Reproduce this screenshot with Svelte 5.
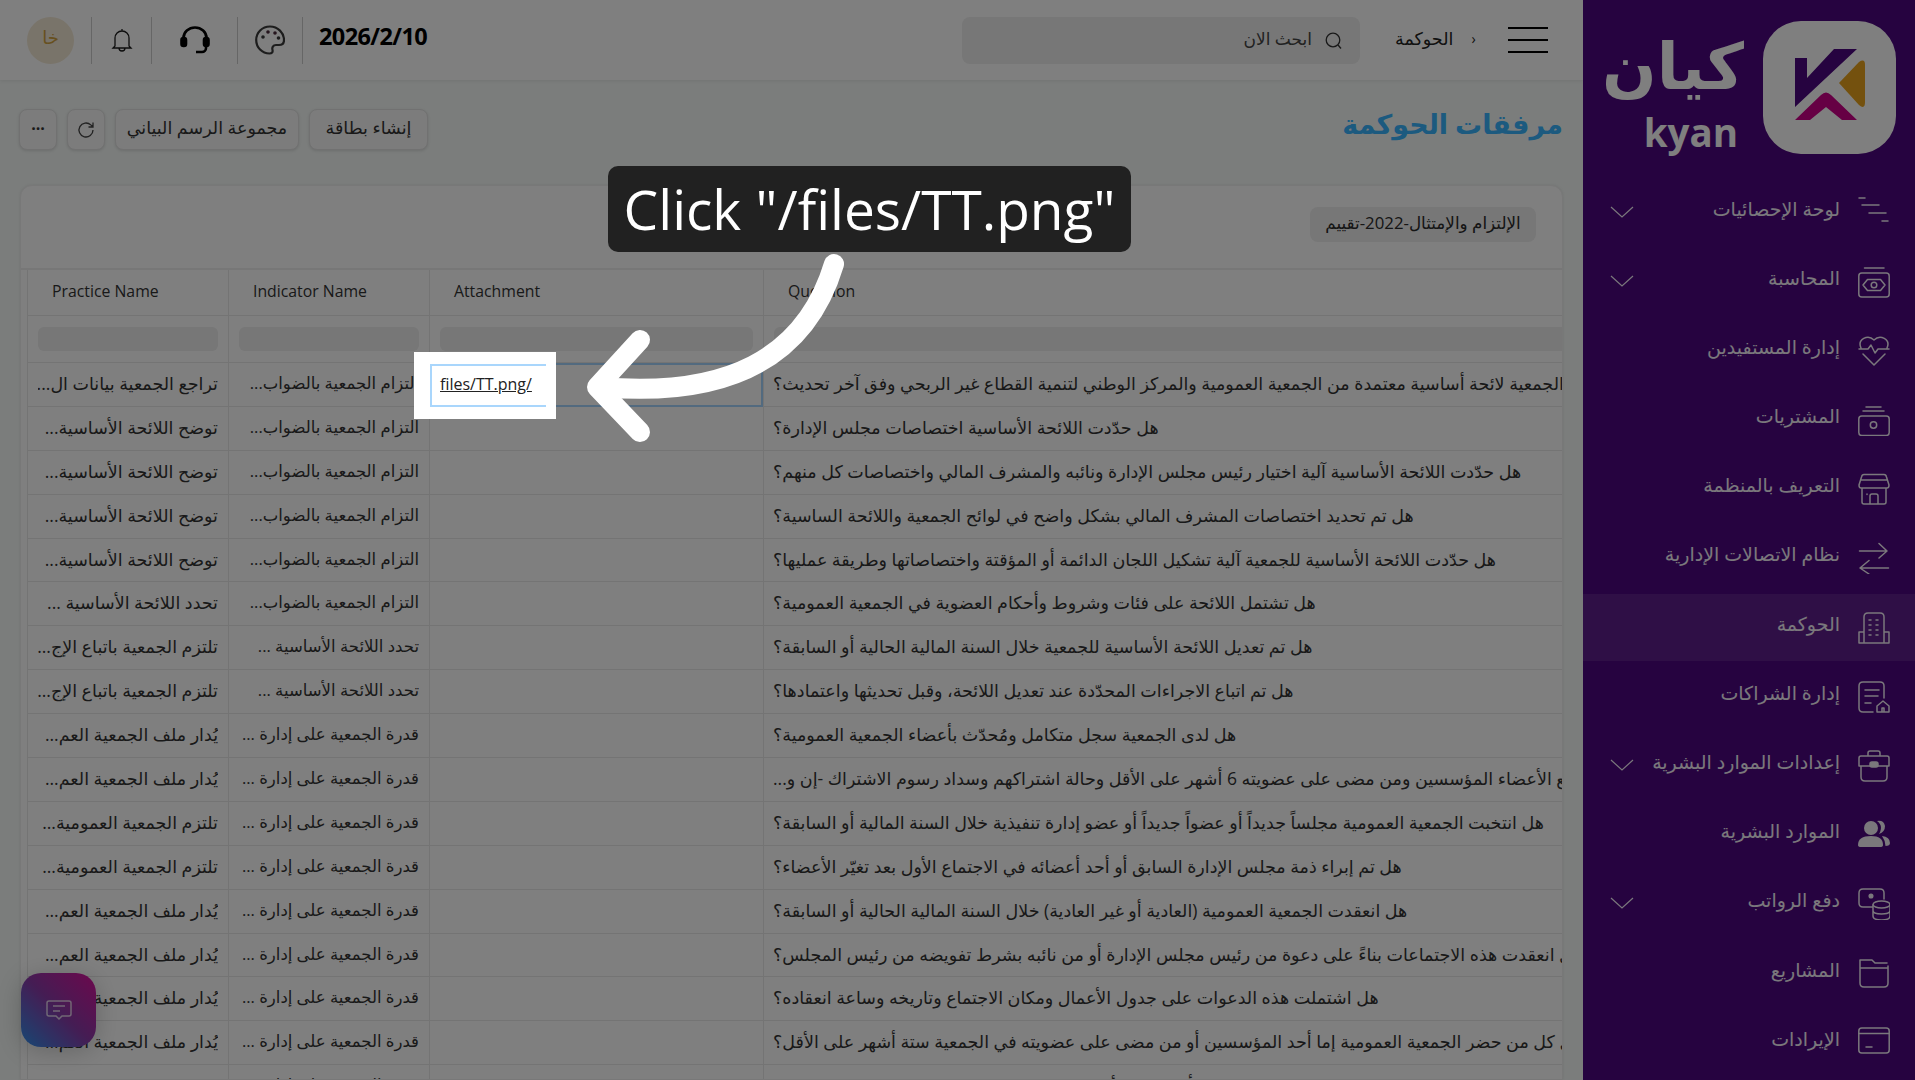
<script>
  const q = [
    'هل لدى الجمعية لائحة أساسية معتمدة من الجمعية العمومية والمركز الوطني لتنمية القطاع غير الربحي وفق آخر تحديث؟',
    'هل حدّدت اللائحة الأساسية اختصاصات مجلس الإدارة؟',
    'هل حدّدت اللائحة الأساسية آلية اختيار رئيس مجلس الإدارة ونائبه والمشرف المالي واختصاصات كل منهم؟',
    'هل تم تحديد اختصاصات المشرف المالي بشكل واضح في لوائح الجمعية واللائحة الساسية؟',
    'هل حدّدت اللائحة الأساسية للجمعية آلية تشكيل اللجان الدائمة أو المؤقتة واختصاصاتها وطريقة عمليها؟',
    'هل تشتمل اللائحة على فئات وشروط وأحكام العضوية في الجمعية العمومية؟',
    'هل تم تعديل اللائحة الأساسية للجمعية خلال السنة المالية الحالية أو السابقة؟',
    'هل تم اتباع الاجراءات المحدّدة عند تعديل اللائحة، وقبل تحديثها واعتمادها؟',
    'هل لدى الجمعية سجل متكامل ومُحدّث بأعضاء الجمعية العمومية؟',
    'هل جميع الأعضاء المؤسسين ومن مضى على عضويته 6 أشهر على الأقل وحالة اشتراكهم وسداد رسوم الاشتراك -إن و...',
    'هل انتخبت الجمعية العمومية مجلساً جديداً أو عضواً جديداً أو عضو إدارة تنفيذية خلال السنة المالية أو السابقة؟',
    'هل تم إبراء ذمة مجلس الإدارة السابق أو أحد أعضائه في الاجتماع الأول بعد تغيّر الأعضاء؟',
    'هل انعقدت الجمعية العمومية (العادية أو غير العادية) خلال السنة المالية الحالية أو السابقة؟',
    'هل انعقدت هذه الاجتماعات بناءً على دعوة من رئيس مجلس الإدارة أو من نائبه بشرط تفويضه من رئيس المجلس؟',
    'هل اشتملت هذه الدعوات على جدول الأعمال ومكان الاجتماع وتاريخه وساعة انعقاده؟',
    'هل كل من حضر الجمعية العمومية إما أحد المؤسسين أو من مضى على عضويته في الجمعية ستة أشهر على الأقل؟',
    'هل أتم جميع الأعضاء سداد رسوم الاشتراك خلال السنة المالية؟'
  ];
  const p1 = 'تراجع الجمعية بيانات ال...', p2 = 'توضح اللائحة الأساسية...', p3 = 'تحدد اللائحة الأساسية ...',
        p4 = 'تلتزم الجمعية باتباع الإج...', p5 = 'يُدار ملف الجمعية العم...', p6 = 'تلتزم الجمعية العمومية...';
  const practice = [p1,p2,p2,p2,p2,p3,p4,p4,p5,p5,p6,p6,p5,p5,p5,p5,p5];
  const i1 = 'التزام الجمعية بالضواب...', i2 = 'تحدد اللائحة الأساسية ...', i3 = 'قدرة الجمعية على إدارة ...';
  const indicator = [i1,i1,i1,i1,i1,i1,i2,i2,i3,i3,i3,i3,i3,i3,i3,i3,i3];
  const rows = q.map((question, i) => ({ question, practice: practice[i], indicator: indicator[i] }));
  const nav = [
    { t: 'لوحة الإحصائيات', k: 'dash', c: true },
    { t: 'المحاسبة', k: 'money', c: true },
    { t: 'إدارة المستفيدين', k: 'heart' },
    { t: 'المشتريات', k: 'wallet' },
    { t: 'التعريف بالمنظمة', k: 'store' },
    { t: 'نظام الاتصالات الإدارية', k: 'swap' },
    { t: 'الحوكمة', k: 'building', a: true },
    { t: 'إدارة الشراكات', k: 'doc' },
    { t: 'إعدادات الموارد البشرية', k: 'case', c: true },
    { t: 'الموارد البشرية', k: 'users' },
    { t: 'دفع الرواتب', k: 'pay', c: true },
    { t: 'المشاريع', k: 'folder' },
    { t: 'الإيرادات', k: 'card' }
  ];
</script>

<div class="page">
  <main class="main">
    <header class="top">
      <div class="avatar">خا</div>
      <div class="cell bell">
        <svg width="22" height="24" viewBox="0 0 22 24" fill="none" stroke="#1c1c1c" stroke-width="1.3"><path d="M11 1v2M4 18V10a7 7 0 0 1 14 0v8l2 2H2zM8 20a3 3 0 0 0 6 0"/></svg>
      </div>
      <div class="cell head">
        <svg width="30" height="28" viewBox="0 0 30 28" fill="none" stroke="#000" stroke-width="2.6"><path d="M3.500 14V12a11.500 10.500 0 0 1 23 0v2"/><rect x="1.500" y="12" width="4.500" height="8" rx="2" fill="#000"/><rect x="24" y="12" width="4.500" height="8" rx="2" fill="#000"/><path d="M26 20v2a4 4 0 0 1-4 4h-6"/></svg>
      </div>
      <div class="cell pal">
        <svg width="30" height="30" viewBox="0 0 30 30" fill="none" stroke="#3a3a3a" stroke-width="2.200"><path d="M15 1.500C7 1.500 1.200 7.500 1.200 15S7 28.500 14.500 28.500c2.500 0 3.500-1.500 3-3.500-.7-2.500.5-5 3.500-5h3c3 0 5-2 5-5 0-7-6-13.500-14-13.500z"/><circle cx="8" cy="12" r="1.800" fill="#3a3a3a" stroke="none"/><circle cx="13" cy="7" r="1.800" fill="#4a2a3a" stroke="none"/><circle cx="20" cy="8" r="1.800" fill="#4a2a3a" stroke="none"/><circle cx="23.500" cy="13" r="1.800" fill="#3a3a3a" stroke="none"/></svg>
      </div>
      <div class="date">2026/2/10</div>
      <div class="search">
        <span class="sText">ابحث الان</span>
        <svg width="17" height="17" viewBox="0 0 17 17" fill="none" stroke="#333" stroke-width="1.300"><circle cx="8" cy="8" r="6.800"/><path d="M13 13l3 3.500"/></svg>
      </div>
      <div class="crumb"><span>الحوكمة</span><span class="chev">›</span></div>
      <div class="burger"><i></i><i></i><i></i></div>
    </header>

    <div class="bar">
      <div class="tools">
        <button class="btn sq dots">···</button>
        <button class="btn sq">
          <svg width="18" height="18" viewBox="0 0 18 18" fill="none" stroke="#444" stroke-width="1.300"><path d="M16 9a7 7 0 1 1-2.200-5.100L16 6M16 1.500V6h-4.500"/></svg>
        </button>
        <button class="btn wide1">مجموعة الرسم البياني</button>
        <button class="btn wide2">إنشاء بطاقة</button>
      </div>
      <h1 class="title">مرفقات الحوكمة</h1>
    </div>

    <section class="card">
      <div class="cardHead"><div class="tag"><span>الإلتزام والإمتثال-2022-تقييم</span></div></div>
      <div class="table">
        <div class="row hrow">
          <div class="c c1">Practice Name</div>
          <div class="c c2">Indicator Name</div>
          <div class="c c3">Attachment</div>
          <div class="c c4">Question</div>
        </div>
        <div class="row frow">
          <div class="c c1"><i class="inp"></i></div>
          <div class="c c2"><i class="inp"></i></div>
          <div class="c c3"><i class="inp"></i></div>
          <div class="c c4"><i class="inp lastinp"></i></div>
        </div>
        {#each rows as r, i}
          <div class="row drow">
            <div class="c c1 rt"><span class="txt">{r.practice}</span></div>
            <div class="c c2 rt"><span class="txt">{r.indicator}</span></div>
            <div class="c c3" class:sel={i === 0}></div>
            <div class="c c4 qt"><span class="qtext">{r.question}</span></div>
          </div>
        {/each}
      </div>
    </section>
  </main>

  <aside class="side">
    <div class="brand">
      <div class="words">
        <div class="ar">كيان</div>
        <div class="en">kyan</div>
      </div>
      <div class="logo">
        <svg width="133" height="133" viewBox="0 0 133 133">
          <path d="M32 37H44V57L71 28H94L32 86Z" fill="#4d0680"/>
          <path d="M76 62L96 41Q102 37 102 44V81Q102 89 96 84Z" fill="#e8a21c"/>
          <path d="M32 99L58 74Q63 69 68 74L94 99H79L63 86L47 99Z" fill="#cc0088"/>
        </svg>
      </div>
    </div>
    <nav class="nav">
      {#each nav as n}
        <div class="item" class:active={n.a}>
          <svg class="ic" width="32" height="32" viewBox="0 0 32 32" fill="none" stroke="currentColor" stroke-width="1.500" stroke-linecap="round" stroke-linejoin="round">
            {#if n.k === 'dash'}
              <path d="M1 1H7M4 8H21M11 16H28M24 24H30"/>
            {:else if n.k === 'money'}
              <path d="M6.500 2H26"/><rect x=".8" y="7" width="30.400" height="24" rx="3"/><path d="M5 19L9.500 13.500H22.500L27 19L22.500 24.500H9.500Z"/><circle cx="16" cy="19" r="2.800"/>
            {:else if n.k === 'heart'}
              <path d="M3 13C-1 4 10-1 16 5C22-1 33 4 29 13M1 14H10L13 10L17 18L20 14H31M5 19L16 30L27 19"/>
            {:else if n.k === 'wallet'}
              <path d="M8 3H23M5 7H26"/><rect x=".8" y="12" width="30.400" height="19.500" rx="3"/><circle cx="15.500" cy="21" r="3.200"/>
            {:else if n.k === 'store'}
              <path d="M6 1.500H26Q28 1.500 28.500 4L31 12Q31 15 29 15H3Q1 15 1 12L3.500 4Q4 1.500 6 1.500ZM3.500 7H28.500M4 15V29Q4 31 6 31H26Q28 31 28 29V15M12 31V23Q12 21 14 21H18Q20 21 20 23V31M9 21V21.500"/>
            {:else if n.k === 'swap'}
              <path d="M1.500 9H29M21 1.500L29 9L21 16M30.500 26H3M11 18.500L2 26L11 32"/>
            {:else if n.k === 'building'}
              <path d="M6 31V5Q6 1 10 1H22Q26 1 26 5V31M1 31V20H6M26 20H31V31M1 31H31M11 8H13M18 8H20M11 13H13M18 13H20M11 18H13M18 18H20M11 23H13M18 23H20"/>
            {:else if n.k === 'doc'}
              <path d="M26 17V5Q26 1 22 1H5Q1 1 1 5V27Q1 31 5 31H15M7 9H21M7 15H20M7 22H13M19 31V25L25 20L31 25V31ZM24 31V27H26V31"/>
            {:else if n.k === 'case'}
              <path d="M10 6V3Q10 1 12 1H20Q22 1 22 3V6M3 6H29Q31 6 31 8V16H1V8Q1 6 3 6ZM3 16V27Q3 31 7 31H25Q29 31 29 27V16"/><rect x="12" y="12" width="8" height="5" rx="2" fill="currentColor"/>
            {:else if n.k === 'users'}
              <g fill="currentColor" stroke="none"><circle cx="13" cy="9" r="7"/><path d="M0 26Q0 17 13 17Q25 17 25 26Q25 28 22 28H3Q0 28 0 26Z"/><path d="M19 2Q26 1 27 7Q27 13 21 15Q24 10 22.500 6Q21 3 19 2ZM24 17Q32 18 32 24Q32 27 27.500 27Q27 21 24 17Z"/></g>
            {:else if n.k === 'pay'}
              <path d="M14 19H5Q1 19 1 15V5Q1 1 5 1H22Q26 1 26 5V11M15 17V28Q15 32 23.500 32Q32 32 32 28V17M15 22.500Q15 26 23.500 26Q32 26 32 22.500"/><ellipse cx="23.500" cy="16.500" rx="8.500" ry="3.500"/><circle cx="13" cy="8" r="1.800" fill="currentColor"/>
            {:else if n.k === 'folder'}
              <path d="M2 8V25Q2 29 6 29H26Q30 29 30 25V8M2 8V2H14L17 5H29M2 10H30"/>
            {:else if n.k === 'card'}
              <rect x=".8" y="1" width="30.400" height="25" rx="3"/><path d="M1 6.500H31M8 20H14"/>
            {/if}
          </svg>
          <span class="lbl">{n.t}</span>
          {#if n.c}
            <svg class="dn" width="24" height="12" viewBox="0 0 24 12" fill="none" stroke="currentColor" stroke-width="1.200"><path d="M1 1L12 11L23 1"/></svg>
          {/if}
        </div>
      {/each}
    </nav>
  </aside>

  <div class="fab">
    <svg width="26" height="21" viewBox="0 0 26 21" fill="none" stroke="#fff" stroke-width="1.500" stroke-opacity=".75"><path d="M3 1H23Q25 1 25 3V14Q25 16 23 16H16L13 19L10 16H3Q1 16 1 14V3Q1 1 3 1ZM7 6H19M7 11H14"/></svg>
  </div>

  <div class="dim"></div>

  <div class="spot">
    <div class="spotCell"><span class="link">files/TT.png/</span></div>
  </div>

  <div class="tip">Click "/files/TT.png"</div>

  <svg class="arrow" width="1915" height="1080" viewBox="0 0 1915 1080" fill="none" stroke="#fff" stroke-width="20" stroke-linecap="round" stroke-linejoin="round">
    <path d="M834 264C805 360 725 398 600 387"/>
    <path d="M640 340L597 387L640 432"/>
  </svg>
</div>

<style>
  :global(body) { margin: 0; }
  .page {
    position: relative; display: flex; width: 1915px; height: 1080px; overflow: hidden;
    font-family: "Open Sans", "DejaVu Sans", sans-serif; background: #f6faf8; color: #2a2a2a;
  }
  .main { width: 1583px; flex: none; display: flex; flex-direction: column; }

  .top {
    height: 80px; flex: none; background: #fff; display: flex; align-items: center; padding: 0 35px 0 27px;
    box-shadow: 0 1px 4px rgba(0,0,0,.08); box-sizing: border-box;
  }
  .avatar {
    width: 47px; height: 47px; border-radius: 50%; background: #f3e8d4; color: #cfa13e; font-size: 18px;
    display: flex; align-items: center; justify-content: center; margin-right: 17px; padding-bottom: 6px; box-sizing: border-box;
  }
  .cell { height: 47px; display: flex; align-items: center; justify-content: center; border-left: 1px solid #ccc; box-sizing: border-box; }
  .bell { width: 60px; }
  .head { width: 86px; }
  .pal { width: 65px; }
  .date { border-left: 1px solid #ccc; height: 47px; padding: 0 0 8px 16px; box-sizing: border-box; display: flex; align-items: center; font-size: 23.500px; font-weight: 700; color: #000; letter-spacing: -.6px; width: 128px; }
  .search {
    margin-left: auto; width: 398px; height: 47px; border-radius: 8px; background: #eee; display: flex; align-items: center;
    justify-content: flex-end; gap: 13px; padding-right: 18px; box-sizing: border-box; font-size: 17px; color: #444;
  }
  .sText { padding-bottom: 4px; }
  .crumb { width: 148px; display: flex; align-items: center; gap: 18px; padding: 0 0 4px 35px; box-sizing: border-box; font-size: 17.500px; color: #222; }
  .chev { font-size: 14px; }
  .burger { width: 40px; display: flex; flex-direction: column; gap: 10px; }
  .burger i { height: 2px; background: #000; display: block; }

  .bar { display: flex; justify-content: space-between; align-items: center; padding: 29px 20px 0 19px; height: 41px; }
  .tools { display: flex; gap: 10px; }
  .btn {
    height: 41px; border: 1px solid #e2e2e2; border-radius: 8px; background: #f8f8f8; box-shadow: 0 1px 3px rgba(0,0,0,.12);
    font-family: inherit; font-size: 17.500px; color: #333; display: flex; align-items: center; justify-content: center; padding: 0 0 5px;
    box-sizing: border-box; white-space: nowrap;
  }
  .sq { width: 38px; padding: 0; }
  .dots { font-weight: 700; font-size: 16px; letter-spacing: 0; padding-bottom: 4px; }
  .wide1 { width: 184px; }
  .wide2 { width: 119px; }
  .title { margin: 0 0 12px; font-size: 27px; font-weight: 700; color: #38b4ff; line-height: 41px; }

  .card {
    margin: 35px 20px 0; flex: 1; min-height: 0; background: #fff; border: 1px solid #f0f0f0; border-radius: 12px 12px 0 0; overflow: hidden;
    box-shadow: 0 0 3px rgba(0,0,0,.08);
  }
  .cardHead { height: 84px; display: flex; justify-content: flex-end; align-items: center; padding: 0 26px 6px 0; box-sizing: border-box; border-bottom: 2px solid #eee; }
  .tag { width: 226px; height: 35px; border-radius: 8px; background: #eee; font-size: 16.800px; display: flex; align-items: center; justify-content: center; overflow: hidden; box-sizing: border-box; padding: 0 15px 4px; }
  .tag span { white-space: nowrap; direction: rtl; overflow: hidden; }
  .table { margin-left: 6px; }
  .row { display: flex; }
  .c { box-sizing: border-box; border-left: 1px solid #e8e8e8; border-bottom: 1px solid #e8e8e8; overflow: hidden; flex: none; }
  .c1 { width: 201px; }
  .c2 { width: 201px; }
  .c3 { width: 334px; }
  .c4 { width: 800px; }
  .hrow .c { height: 46px; display: flex; align-items: center; padding: 0 0 4px 24px; font-size: 15.800px; color: #333; }
  .frow .c { height: 47px; padding: 11px 10px 0; }
  .inp { display: block; height: 24px; border-radius: 6px; background: #eee; }
  .lastinp { margin-right: -10px; border-radius: 6px 0 0 6px; }
  .drow .c { height: 43.9px; line-height: 40px; font-size: 17.500px; color: #333; white-space: nowrap; }
  .drow .c2 { font-size: 16.500px; }
  .rt { padding: 0 10px; direction: rtl; text-align: right; }
  .txt { display: block; overflow: hidden; text-overflow: clip; }
  .qt { padding-left: 9px; text-align: left; direction: ltr; }
  .qtext { display: inline-block; direction: rtl; }
  .sel { border: 2px solid #a5d5ff; }

  .side { width: 332px; flex: none; background: #4d0680; color: #fff; display: flex; flex-direction: column; }
  .brand { height: 179px; flex: none; box-sizing: border-box; padding: 21px 19px 0 19px; display: flex; justify-content: space-between; }
  .words { width: 136px; color: #fff; text-align: right; }
  .ar { font-size: 64px; font-weight: 700; line-height: 88px; height: 92px; white-space: nowrap; padding-right: 2px; }
  .en { font-family: "Open Sans", sans-serif; font-size: 38.500px; font-weight: 700; line-height: 42px; margin-top: -2px; }
  .logo { width: 133px; height: 133px; border-radius: 38px; background: #fff; flex: none; }
  .nav { display: flex; flex-direction: column; gap: 2.200px; }
  .item { height: 67px; flex: none; display: flex; direction: rtl; align-items: center; padding: 0 25px 0 27px; box-sizing: border-box; gap: 18px; color: #f4f0f8; }
  .item.active { background: rgba(255,255,255,.1); }
  .ic { flex: none; }
  .lbl { font-size: 19px; padding-bottom: 8px; white-space: nowrap; }
  .dn { margin-right: auto; margin-bottom: 2px; flex: none; }

  .fab {
    position: absolute; left: 21px; top: 973px; width: 75px; height: 74px; border-radius: 20px;
    background: linear-gradient(45deg, #2f8fe8 0%, #8a3aa8 50%, #d8109a 100%);
    box-shadow: 0 4px 24px rgba(0,0,0,.2); display: flex; align-items: center; justify-content: center;
  }
  .dim { position: absolute; inset: 0; background: rgba(0,0,0,.5); }
  .spot {
    position: absolute; left: 414px; top: 352px; width: 142px; height: 67px; background: #fff; box-sizing: border-box;
    padding: 12px 10px 0 16px;
  }
  .spotCell { height: 43px; border: 2px solid #a9d6fc; border-right: 0; box-sizing: border-box; padding: 0 0 3px 8px; display: flex; align-items: center; }
  .link { font-size: 16px; color: #222; text-decoration: underline; }
  .tip {
    position: absolute; left: 608px; top: 166px; width: 523px; height: 86px; box-sizing: border-box; background: #212121; border-radius: 10px;
    color: #fff; font-size: 55px; line-height: 86px; text-align: center; white-space: nowrap;
  }
  .arrow { position: absolute; left: 0; top: 0; pointer-events: none; }
</style>
